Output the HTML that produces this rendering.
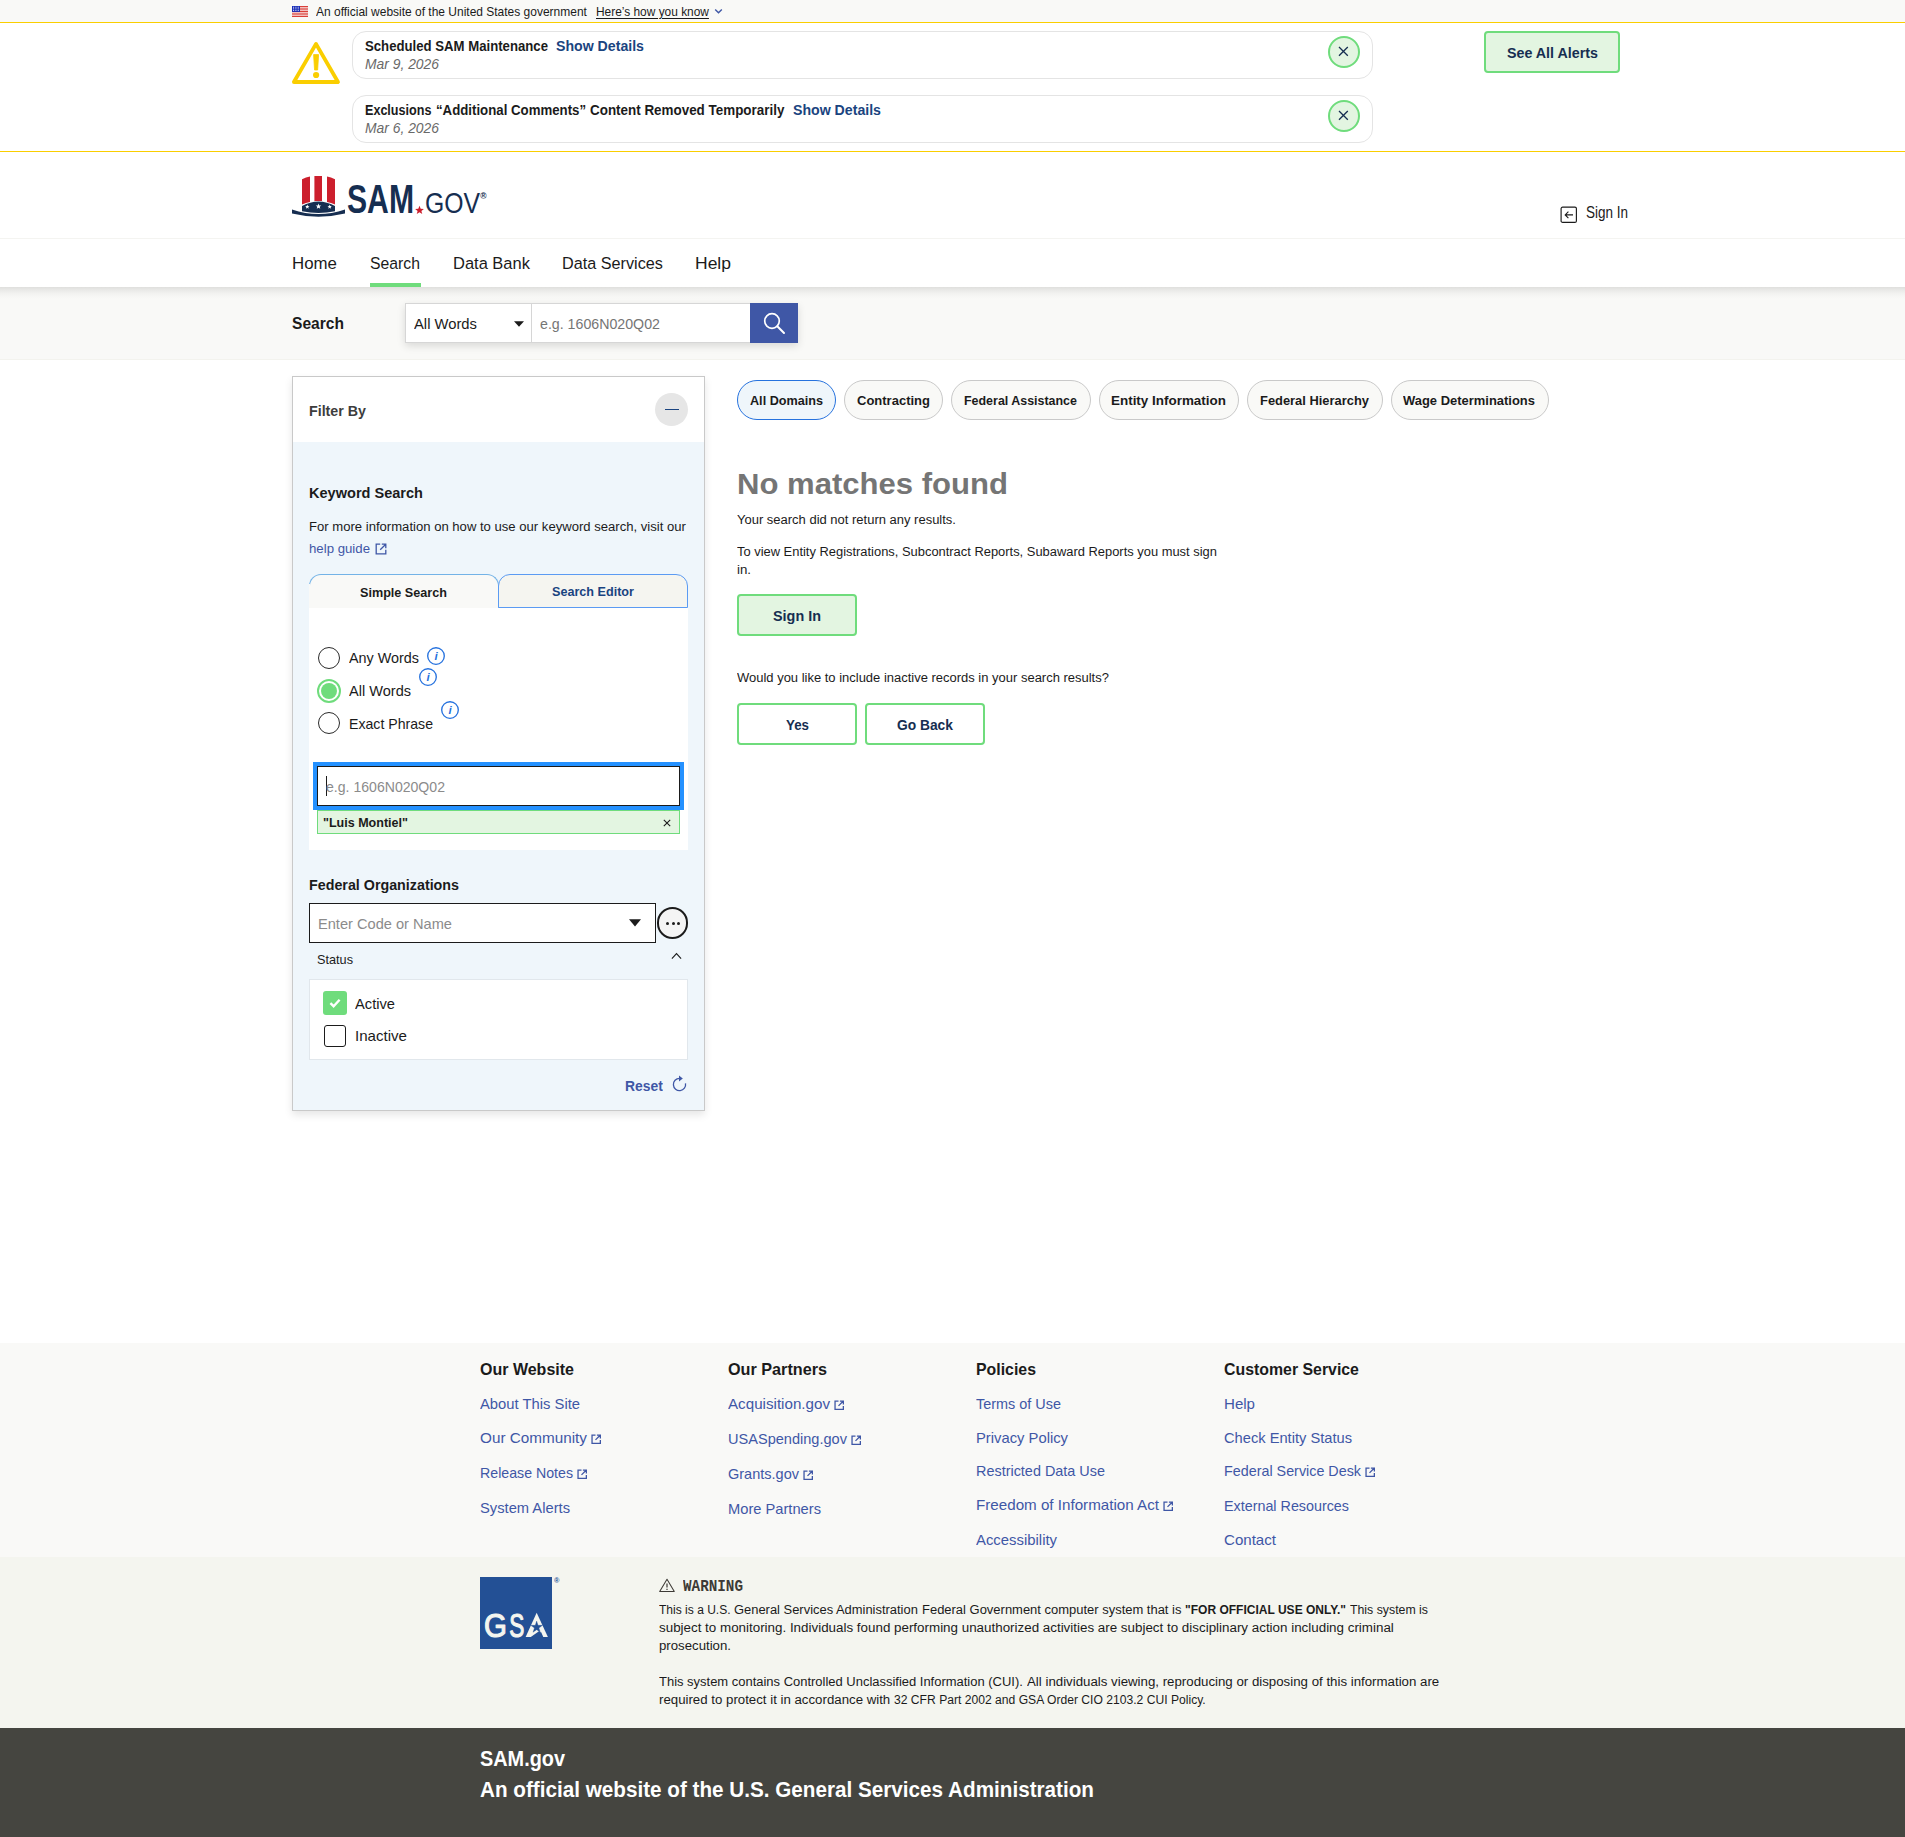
<!DOCTYPE html>
<html lang="en"><head><meta charset="utf-8"><title>SAM.gov | Search</title>
<style>
html,body{margin:0;padding:0;}
body{width:1905px;height:1837px;position:relative;overflow:hidden;background:#fff;font-family:"Liberation Sans",sans-serif;color:#1b1b1b;}
.b{position:absolute;box-sizing:border-box;display:block;}
.t{position:absolute;white-space:nowrap;line-height:1;transform-origin:0 0;display:block;}
</style></head><body>
<div class="b" style="left:0px;top:0px;width:1905px;height:22px;background:#f9f9f7;"></div>
<svg class="b" style="left:292px;top:6px;" width="16" height="11" viewBox="0 0 16 11"><rect width="16" height="11" fill="#fff"/><rect x="0" y="0.000" width="16" height="0.97" fill="#d83933"/><rect x="0" y="1.672" width="16" height="0.97" fill="#d83933"/><rect x="0" y="3.343" width="16" height="0.97" fill="#d83933"/><rect x="0" y="5.015" width="16" height="0.97" fill="#d83933"/><rect x="0" y="6.687" width="16" height="0.97" fill="#d83933"/><rect x="0" y="8.358" width="16" height="0.97" fill="#d83933"/><rect x="0" y="10.030" width="16" height="0.97" fill="#d83933"/><rect width="8" height="5.92" fill="#1a2fb8"/><rect x="1.10" y="0.80" width="1" height="0.85" fill="#fff"/><rect x="1.10" y="2.45" width="1" height="0.85" fill="#fff"/><rect x="1.10" y="4.10" width="1" height="0.85" fill="#fff"/><rect x="3.40" y="0.80" width="1" height="0.85" fill="#fff"/><rect x="3.40" y="2.45" width="1" height="0.85" fill="#fff"/><rect x="3.40" y="4.10" width="1" height="0.85" fill="#fff"/><rect x="5.70" y="0.80" width="1" height="0.85" fill="#fff"/><rect x="5.70" y="2.45" width="1" height="0.85" fill="#fff"/><rect x="5.70" y="4.10" width="1" height="0.85" fill="#fff"/></svg>
<span class="t" style="left:316px;top:5.66px;font-size:12.1px;color:#1b1b1b;transform:scaleX(0.9908);">An official website of the United States government</span>
<span class="t" style="left:596px;top:5.66px;font-size:12.1px;color:#1b1b1b;transform:scaleX(0.9844);text-decoration:underline;text-underline-offset:1.5px;">Here’s how you know</span>
<svg class="b" style="left:714px;top:8px;" width="9" height="7" viewBox="0 0 9 7"><path d="M1.2 1.5 L4.5 4.8 L7.8 1.5" fill="none" stroke="#3f57a6" stroke-width="1.4"/></svg>
<div class="b" style="left:0px;top:22px;width:1905px;height:1px;background:#face00;"></div>
<div class="b" style="left:0px;top:151px;width:1905px;height:1px;background:#face00;"></div>
<svg class="b" style="left:291px;top:41px;" width="50" height="44" viewBox="0 0 50 44"><path d="M25 2.9 L47 41 L2.9 41 Z" fill="none" stroke="#face00" stroke-width="3.8" stroke-linejoin="round"/><path d="M22.6 13.6 h5 l-0.95 15.4 h-3.1 z" fill="#face00" stroke="#face00" stroke-width="0.8" stroke-linejoin="round"/><circle cx="25.1" cy="34" r="3.1" fill="#face00"/></svg>
<div class="b" style="left:352px;top:31px;width:1021px;height:48px;border:1px solid #e4e4e4;border-radius:14px;background:#fff;"></div>
<span class="t" style="left:365px;top:38.90px;font-size:14.3px;color:#1b1b1b;transform:scaleX(0.9212);font-weight:700;">Scheduled SAM Maintenance</span>
<span class="t" style="left:556px;top:38.90px;font-size:14.3px;color:#1a4480;transform:scaleX(0.9888);font-weight:700;">Show Details</span>
<span class="t" style="left:365px;top:56.50px;font-size:14.3px;color:#696969;transform:scaleX(0.9697);font-style:italic;">Mar 9, 2026</span>
<div class="b" style="left:1328.2px;top:35.7px;width:32px;height:32px;border:2px solid #6fdc7c;border-radius:50%;background:#e3f5e1;"></div>
<svg class="b" style="left:1336.1px;top:44.2px;" width="15" height="15" viewBox="0 0 15 15"><path d="M3 3 L11.8 11.8 M11.8 3 L3 11.8" stroke="#162e51" stroke-width="1.3" fill="none"/></svg>
<div class="b" style="left:352px;top:95px;width:1021px;height:48px;border:1px solid #e4e4e4;border-radius:14px;background:#fff;"></div>
<span class="t" style="left:365px;top:102.90px;font-size:14.3px;color:#1b1b1b;transform:scaleX(0.8795);font-weight:700;">Exclusions</span>
<span class="t" style="left:436px;top:102.90px;font-size:14.3px;color:#1b1b1b;transform:scaleX(0.9261);font-weight:700;">“Additional Comments”</span>
<span class="t" style="left:589.6px;top:102.90px;font-size:14.3px;color:#1b1b1b;transform:scaleX(0.9386);font-weight:700;">Content Removed Temporarily</span>
<span class="t" style="left:793px;top:102.90px;font-size:14.3px;color:#1a4480;transform:scaleX(0.9888);font-weight:700;">Show Details</span>
<span class="t" style="left:365px;top:120.50px;font-size:14.3px;color:#696969;transform:scaleX(0.9697);font-style:italic;">Mar 6, 2026</span>
<div class="b" style="left:1328.2px;top:99.7px;width:32px;height:32px;border:2px solid #6fdc7c;border-radius:50%;background:#e3f5e1;"></div>
<svg class="b" style="left:1336.1px;top:108.2px;" width="15" height="15" viewBox="0 0 15 15"><path d="M3 3 L11.8 11.8 M11.8 3 L3 11.8" stroke="#162e51" stroke-width="1.3" fill="none"/></svg>
<div class="b" style="left:1484px;top:31px;width:136px;height:42px;border:2px solid #6fdc7c;border-radius:4px;background:#e3f5e1;"></div>
<span class="t" style="left:1507px;top:44.63px;font-size:15.2px;color:#162e51;transform:scaleX(0.9394);font-weight:700;">See All Alerts</span>
<svg class="b" style="left:292px;top:175px;" width="53" height="44" viewBox="0 0 53 44">
<path d="M10 4.2 Q14 2.2 18 1.6 L18 27 Q14 27.6 10 29.6 Z" fill="#cc1f2d"/>
<path d="M22.4 1 H30 V26 H22.4 Z" fill="#cc1f2d"/>
<path d="M35 1.6 Q39 2.2 43 4.2 L43 29.6 Q39 27.6 35 27 Z" fill="#cc1f2d"/>
<path d="M10 31 Q26.5 22 43 31 L43 36.3 Q26.5 39.5 10 36.3 Z" fill="#162e51"/>
<path d="M0 34.5 Q26.5 43.5 53 34.5 L53 38.6 Q26.5 45 0 38.6 Z" fill="#162e51"/>
<g fill="#fff">
<path d="M0,-2.3 L0.6,-0.75 L2.2,-0.7 L0.95,0.3 L1.4,1.9 L0,1 L-1.4,1.9 L-0.95,0.3 L-2.2,-0.7 L-0.6,-0.75 Z" transform="translate(15.3,31.8)"/>
<path d="M0,-2.3 L0.6,-0.75 L2.2,-0.7 L0.95,0.3 L1.4,1.9 L0,1 L-1.4,1.9 L-0.95,0.3 L-2.2,-0.7 L-0.6,-0.75 Z" transform="translate(26.5,31.4) scale(1.25)"/>
<path d="M0,-2.3 L0.6,-0.75 L2.2,-0.7 L0.95,0.3 L1.4,1.9 L0,1 L-1.4,1.9 L-0.95,0.3 L-2.2,-0.7 L-0.6,-0.75 Z" transform="translate(37.7,31.8)"/>
</g></svg>
<svg class="b" style="left:347px;top:175px;" width="150" height="46" viewBox="0 0 150 46"><text x="0" y="38.1" font-family="Liberation Sans" font-weight="700" font-size="39.8" fill="#162e51" textLength="67" lengthAdjust="spacingAndGlyphs">SAM</text>
<path d="M0,-4.6 L1.2,-1.45 L4.4,-1.4 L1.9,0.6 L2.75,3.75 L0,2 L-2.75,3.75 L-1.9,0.6 L-4.4,-1.4 L-1.2,-1.45 Z" fill="#cc1f2d" transform="translate(72.5,35.3)"/>
<text x="78" y="37.8" font-family="Liberation Sans" font-weight="400" font-size="30.4" fill="#162e51" textLength="55" lengthAdjust="spacingAndGlyphs">GOV</text>
<text x="133.2" y="24.2" font-family="Liberation Sans" font-weight="700" font-size="8.5" fill="#162e51">®</text></svg>
<svg class="b" style="left:1559.6px;top:206px;" width="19" height="19" viewBox="0 0 19 19"><rect x="1.1" y="1.1" width="15.3" height="15.3" rx="1.5" fill="none" stroke="#1b1b1b" stroke-width="1.15"/><path d="M13 8.9 H5.5 M8.4 5.7 L5.2 8.9 L8.4 12.1" fill="none" stroke="#1b1b1b" stroke-width="1.1"/></svg>
<span class="t" style="left:1586px;top:204.71px;font-size:15.7px;color:#1b1b1b;transform:scaleX(0.8593);">Sign In</span>
<div class="b" style="left:0px;top:238px;width:1905px;height:1px;background:#f4f4f1;"></div>
<span class="t" style="left:292px;top:255.20px;font-size:16.3px;color:#1b1b1b;transform:scaleX(1.0350);">Home</span>
<span class="t" style="left:370px;top:255.20px;font-size:16.3px;color:#1b1b1b;transform:scaleX(0.9681);">Search</span>
<span class="t" style="left:453px;top:255.20px;font-size:16.3px;color:#1b1b1b;transform:scaleX(1.0117);">Data Bank</span>
<span class="t" style="left:562px;top:255.20px;font-size:16.3px;color:#1b1b1b;transform:scaleX(0.9955);">Data Services</span>
<span class="t" style="left:695px;top:255.20px;font-size:16.3px;color:#1b1b1b;transform:scaleX(1.0739);">Help</span>
<div class="b" style="left:370px;top:283px;width:51px;height:4px;background:#6fdc7c;"></div>
<div class="b" style="left:0px;top:287px;width:1905px;height:73px;background:#f9f9f7;"></div>
<div class="b" style="left:0px;top:287px;width:1905px;height:12px;background:linear-gradient(#dfdfdd 0%,#e9e9e7 25%,#f1f1ef 50%,#f6f6f4 75%,#f9f9f7 100%);"></div>
<div class="b" style="left:0px;top:359px;width:1905px;height:1px;background:#f3f3ee;"></div>
<span class="t" style="left:292px;top:314.70px;font-size:16.3px;color:#1b1b1b;transform:scaleX(0.9564);font-weight:700;">Search</span>
<div class="b" style="left:405px;top:303px;width:393px;height:40px;box-shadow:0 3px 8px rgba(0,0,0,0.13);background:#fff;"></div>
<div class="b" style="left:405px;top:303px;width:127px;height:40px;border:1px solid #d6d6d6;background:#fff;"></div>
<div class="b" style="left:531px;top:303px;width:220px;height:40px;border:1px solid #d6d6d6;background:#fff;"></div>
<span class="t" style="left:414px;top:316.84px;font-size:14.6px;color:#1b1b1b;transform:scaleX(1.0129);">All Words</span>
<svg class="b" style="left:513px;top:320px;" width="12" height="8" viewBox="0 0 12 8"><path d="M1 1.2 H11 L6 6.8 Z" fill="#1b1b1b"/></svg>
<span class="t" style="left:540px;top:317.04px;font-size:14.6px;color:#757575;transform:scaleX(0.9725);">e.g. 1606N020Q02</span>
<div class="b" style="left:750px;top:303px;width:48px;height:40px;background:#3f57a6;"></div>
<svg class="b" style="left:762px;top:311px;" width="24" height="24" viewBox="0 0 24 24"><circle cx="10" cy="10" r="7.3" fill="none" stroke="#fff" stroke-width="1.7"/><path d="M15.3 15.3 L22 22" stroke="#fff" stroke-width="2" stroke-linecap="round"/></svg>
<div class="b" style="left:292px;top:376px;width:413px;height:735px;border:1px solid #c9c9c9;background:#eff6fb;box-shadow:0 4px 8px rgba(0,0,0,0.10);"></div>
<div class="b" style="left:293px;top:377px;width:411px;height:65px;background:#fff;"></div>
<span class="t" style="left:309px;top:403.73px;font-size:14.5px;color:#3d3d3d;transform:scaleX(0.9825);font-weight:700;">Filter By</span>
<div class="b" style="left:655px;top:393px;width:33px;height:33px;border-radius:50%;background:#e6e6e6;"></div>
<div class="b" style="left:665.3px;top:408.5px;width:13.6px;height:1.2px;background:#1a4480;"></div>
<span class="t" style="left:309px;top:486.43px;font-size:14.5px;color:#1b1b1b;transform:scaleX(1.0033);font-weight:700;">Keyword Search</span>
<span class="t" style="left:309px;top:521.09px;font-size:12.3px;color:#1b1b1b;transform:scaleX(1.0646);">For more information on how to use our keyword search, visit our</span>
<span class="t" style="left:309px;top:542.99px;font-size:12.3px;color:#3f57a6;transform:scaleX(1.0746);">help guide</span>
<svg class="b" style="left:375px;top:542.6px;" width="12" height="12" viewBox="0 0 12 12"><path d="M5.2 1.2 H1.2 V10.8 H10.8 V6.8 M6.8 1.2 H10.8 V5.2 M10.8 1.2 L5.2 6.8" fill="none" stroke="#3f57a6" stroke-width="1.3"/></svg>
<div class="b" style="left:309px;top:607px;width:379px;height:243px;background:#fff;"></div>
<div class="b" style="left:309px;top:574px;width:190px;height:34px;background:#f9f9f7;border:1px solid #73b3e7;border-bottom:none;border-radius:12px 12px 0 0;"></div>
<div class="b" style="left:309px;top:584px;width:1px;height:24px;background:#f9f9f7;"></div>
<div class="b" style="left:498px;top:574px;width:190px;height:34px;background:#f5f5f0;border:1px solid #5b9bf3;border-radius:12px 12px 0 0;"></div>
<span class="t" style="left:360px;top:585.86px;font-size:13.4px;color:#1b1b1b;transform:scaleX(0.9420);font-weight:700;">Simple Search</span>
<span class="t" style="left:552px;top:584.86px;font-size:13.4px;color:#1a4480;transform:scaleX(0.9412);font-weight:700;">Search Editor</span>
<div class="b" style="left:317.5px;top:646.5px;width:22px;height:22px;border-radius:50%;background:#fff;border:1.6px solid #2b2b2b;"></div>
<span class="t" style="left:349px;top:650.30px;font-size:15px;color:#1b1b1b;transform:scaleX(0.9578);">Any Words</span>
<svg class="b" style="left:426px;top:646px;" width="20" height="20" viewBox="0 0 20 20"><circle cx="10" cy="10" r="8.3" fill="none" stroke="#2672de" stroke-width="1.35"/><text x="10" y="14.4" text-anchor="middle" font-family="Liberation Sans" font-style="italic" font-weight="700" font-size="11.5" fill="#2672de">i</text></svg>
<div class="b" style="left:317px;top:679px;width:24px;height:24px;border-radius:50%;background:#fff;border:2px solid #6fdc7c;"></div>
<div class="b" style="left:321px;top:683px;width:16px;height:16px;border-radius:50%;background:#6fdc7c;"></div>
<span class="t" style="left:349px;top:683.30px;font-size:15px;color:#1b1b1b;transform:scaleX(0.9702);">All Words</span>
<svg class="b" style="left:418px;top:667px;" width="20" height="20" viewBox="0 0 20 20"><circle cx="10" cy="10" r="8.3" fill="none" stroke="#2672de" stroke-width="1.35"/><text x="10" y="14.4" text-anchor="middle" font-family="Liberation Sans" font-style="italic" font-weight="700" font-size="11.5" fill="#2672de">i</text></svg>
<div class="b" style="left:317.5px;top:711.8px;width:22px;height:22px;border-radius:50%;background:#fff;border:1.6px solid #2b2b2b;"></div>
<span class="t" style="left:349px;top:716.30px;font-size:15px;color:#1b1b1b;transform:scaleX(0.9416);">Exact Phrase</span>
<svg class="b" style="left:440px;top:700px;" width="20" height="20" viewBox="0 0 20 20"><circle cx="10" cy="10" r="8.3" fill="none" stroke="#2672de" stroke-width="1.35"/><text x="10" y="14.4" text-anchor="middle" font-family="Liberation Sans" font-style="italic" font-weight="700" font-size="11.5" fill="#2672de">i</text></svg>
<div class="b" style="left:313px;top:762px;width:371px;height:48px;background:#2491ff;"></div>
<div class="b" style="left:317px;top:766px;width:363px;height:40px;background:#fff;border:1px solid #1b1b1b;"></div>
<div class="b" style="left:326px;top:776px;width:1px;height:20px;background:#1b1b1b;"></div>
<span class="t" style="left:326px;top:779.67px;font-size:14.8px;color:#8b8b8b;transform:scaleX(0.9514);">e.g. 1606N020Q02</span>
<div class="b" style="left:317px;top:810px;width:363px;height:24px;background:#e3f5e1;border:1px solid #6fdc7c;"></div>
<span class="t" style="left:323px;top:817.13px;font-size:12.6px;color:#1b1b1b;transform:scaleX(0.9948);font-weight:700;">"Luis Montiel"</span>
<svg class="b" style="left:662px;top:818px;" width="10" height="10" viewBox="0 0 10 10"><path d="M1.8 1.8 L8.2 8.2 M8.2 1.8 L1.8 8.2" stroke="#1b1b1b" stroke-width="1.1" fill="none"/></svg>
<span class="t" style="left:309px;top:877.93px;font-size:14.5px;color:#1b1b1b;transform:scaleX(0.9850);font-weight:700;">Federal Organizations</span>
<div class="b" style="left:309px;top:903px;width:347px;height:40px;background:#fff;border:1px solid #1b1b1b;"></div>
<span class="t" style="left:318px;top:916.20px;font-size:15px;color:#8b8b8b;transform:scaleX(0.9741);">Enter Code or Name</span>
<svg class="b" style="left:628px;top:918px;" width="14" height="10" viewBox="0 0 14 10"><path d="M1 1.2 H13 L7 8.4 Z" fill="#1b1b1b"/></svg>
<div class="b" style="left:656.5px;top:907px;width:31.5px;height:31.5px;border-radius:50%;background:#f4f4f4;border:2px solid #1b1b1b;"></div>
<div class="b" style="left:666.3px;top:922.4px;width:3.1px;height:3.1px;border-radius:50%;background:#1b1b1b;"></div>
<div class="b" style="left:671.5999999999999px;top:922.4px;width:3.1px;height:3.1px;border-radius:50%;background:#1b1b1b;"></div>
<div class="b" style="left:676.9px;top:922.4px;width:3.1px;height:3.1px;border-radius:50%;background:#1b1b1b;"></div>
<span class="t" style="left:317px;top:954.23px;font-size:12.6px;color:#1b1b1b;transform:scaleX(1.0078);">Status</span>
<svg class="b" style="left:670.3px;top:950.8px;" width="13" height="9" viewBox="0 0 13 9"><path d="M1.9 7.6 L6.5 2.6 L11.1 7.6" fill="none" stroke="#1b1b1b" stroke-width="1.1"/></svg>
<div class="b" style="left:309px;top:979px;width:379px;height:81px;background:#fff;border:1px solid #e1e7ec;"></div>
<div class="b" style="left:323px;top:991px;width:24px;height:24px;border-radius:3px;background:#6fdc7c;"></div>
<svg class="b" style="left:328px;top:996px;" width="14" height="14" viewBox="0 0 14 14"><path d="M2.4 7.2 L5.6 10.2 L11.6 3.8" fill="none" stroke="#fff" stroke-width="2.4"/></svg>
<span class="t" style="left:355px;top:995.90px;font-size:15px;color:#1b1b1b;transform:scaleX(0.9793);">Active</span>
<div class="b" style="left:324px;top:1024.5px;width:22px;height:22px;border-radius:3px;background:#fff;border:1.6px solid #1b1b1b;"></div>
<span class="t" style="left:355px;top:1027.90px;font-size:15px;color:#1b1b1b;transform:scaleX(1.0059);">Inactive</span>
<span class="t" style="left:625px;top:1077.80px;font-size:15px;color:#3f57a6;transform:scaleX(0.9252);font-weight:700;">Reset</span>
<svg class="b" style="left:671px;top:1075.2px;" width="17" height="18" viewBox="0 0 17 18"><path d="M8.5 3.4 A6.1 6.1 0 1 0 14.5 8.4" fill="none" stroke="#3f57a6" stroke-width="1.3"/><path d="M8 0.4 L11.8 3.4 L8 6.4 Z" fill="#3f57a6"/></svg>
<div class="b" style="left:737px;top:380px;width:99px;height:40px;border-radius:20px;border:1px solid #2672de;background:#eff6fb;"></div>
<span class="t" style="left:750px;top:394.63px;font-size:12.6px;color:#1b1b1b;transform:scaleX(1.0026);font-weight:700;">All Domains</span>
<div class="b" style="left:844px;top:380px;width:99px;height:40px;border-radius:20px;border:1px solid #c9c9c9;background:#f9f9f7;"></div>
<span class="t" style="left:857px;top:394.63px;font-size:12.6px;color:#1b1b1b;transform:scaleX(1.0326);font-weight:700;">Contracting</span>
<div class="b" style="left:951px;top:380px;width:140px;height:40px;border-radius:20px;border:1px solid #c9c9c9;background:#f9f9f7;"></div>
<span class="t" style="left:964px;top:394.63px;font-size:12.6px;color:#1b1b1b;transform:scaleX(0.9878);font-weight:700;">Federal Assistance</span>
<div class="b" style="left:1099px;top:380px;width:140px;height:40px;border-radius:20px;border:1px solid #c9c9c9;background:#f9f9f7;"></div>
<span class="t" style="left:1111px;top:394.63px;font-size:12.6px;color:#1b1b1b;transform:scaleX(1.0668);font-weight:700;">Entity Information</span>
<div class="b" style="left:1247px;top:380px;width:136px;height:40px;border-radius:20px;border:1px solid #c9c9c9;background:#f9f9f7;"></div>
<span class="t" style="left:1260px;top:394.63px;font-size:12.6px;color:#1b1b1b;transform:scaleX(1.0239);font-weight:700;">Federal Hierarchy</span>
<div class="b" style="left:1391px;top:380px;width:158px;height:40px;border-radius:20px;border:1px solid #c9c9c9;background:#f9f9f7;"></div>
<span class="t" style="left:1403px;top:394.63px;font-size:12.6px;color:#1b1b1b;transform:scaleX(1.0284);font-weight:700;">Wage Determinations</span>
<span class="t" style="left:737px;top:468.91px;font-size:30px;color:#757575;transform:scaleX(1.0356);font-weight:700;">No matches found</span>
<span class="t" style="left:737px;top:513.79px;font-size:12.3px;color:#1b1b1b;transform:scaleX(1.0560);">Your search did not return any results.</span>
<span class="t" style="left:737px;top:545.79px;font-size:12.3px;color:#1b1b1b;transform:scaleX(1.0495);">To view Entity Registrations, Subcontract Reports, Subaward Reports you must sign</span>
<span class="t" style="left:737px;top:563.79px;font-size:12.3px;color:#1b1b1b;transform:scaleX(1.0777);">in.</span>
<div class="b" style="left:737px;top:594px;width:120px;height:42px;border:2px solid #6fdc7c;border-radius:4px;background:#e3f5e1;"></div>
<span class="t" style="left:773px;top:607.63px;font-size:15.2px;color:#162e51;transform:scaleX(0.9475);font-weight:700;">Sign In</span>
<span class="t" style="left:737px;top:671.79px;font-size:12.3px;color:#1b1b1b;transform:scaleX(1.0552);">Would you like to include inactive records in your search results?</span>
<div class="b" style="left:737px;top:703px;width:120px;height:42px;border:2px solid #6fdc7c;border-radius:4px;background:#fff;"></div>
<span class="t" style="left:786px;top:716.63px;font-size:15.2px;color:#162e51;transform:scaleX(0.8776);font-weight:700;">Yes</span>
<div class="b" style="left:865px;top:703px;width:120px;height:42px;border:2px solid #6fdc7c;border-radius:4px;background:#fff;"></div>
<span class="t" style="left:897px;top:716.63px;font-size:15.2px;color:#162e51;transform:scaleX(0.9081);font-weight:700;">Go Back</span>
<div class="b" style="left:0px;top:1343px;width:1905px;height:214px;background:#f9f9f7;"></div>
<div class="b" style="left:0px;top:1557px;width:1905px;height:171px;background:#f4f5ef;"></div>
<div class="b" style="left:0px;top:1728px;width:1905px;height:109px;background:#454540;"></div>
<span class="t" style="left:480px;top:1361.75px;font-size:16.6px;color:#1b1b1b;transform:scaleX(0.9644);font-weight:700;">Our Website</span>
<span class="t" style="left:480px;top:1396.30px;font-size:15px;color:#3f57a6;transform:scaleX(0.9857);">About This Site</span>
<span class="t" style="left:480px;top:1430.30px;font-size:15px;color:#3f57a6;transform:scaleX(1.0188);">Our Community</span>
<svg class="b" style="left:590.6px;top:1433.6px;" width="10.4" height="10.4" viewBox="0 0 12 12"><path d="M5.2 1.2 H1.2 V10.8 H10.8 V6.8 M6.8 1.2 H10.8 V5.2 M10.8 1.2 L5.2 6.8" fill="none" stroke="#3f57a6" stroke-width="1.5"/></svg>
<span class="t" style="left:480px;top:1465.30px;font-size:15px;color:#3f57a6;transform:scaleX(0.9453);">Release Notes</span>
<svg class="b" style="left:576.6px;top:1468.6px;" width="10.4" height="10.4" viewBox="0 0 12 12"><path d="M5.2 1.2 H1.2 V10.8 H10.8 V6.8 M6.8 1.2 H10.8 V5.2 M10.8 1.2 L5.2 6.8" fill="none" stroke="#3f57a6" stroke-width="1.5"/></svg>
<span class="t" style="left:480px;top:1500.30px;font-size:15px;color:#3f57a6;transform:scaleX(0.9815);">System Alerts</span>
<span class="t" style="left:728px;top:1361.75px;font-size:16.6px;color:#1b1b1b;transform:scaleX(0.9756);font-weight:700;">Our Partners</span>
<span class="t" style="left:728px;top:1396.30px;font-size:15px;color:#3f57a6;transform:scaleX(1.0110);">Acquisition.gov</span>
<svg class="b" style="left:833.6px;top:1399.6px;" width="10.4" height="10.4" viewBox="0 0 12 12"><path d="M5.2 1.2 H1.2 V10.8 H10.8 V6.8 M6.8 1.2 H10.8 V5.2 M10.8 1.2 L5.2 6.8" fill="none" stroke="#3f57a6" stroke-width="1.5"/></svg>
<span class="t" style="left:728px;top:1431.30px;font-size:15px;color:#3f57a6;transform:scaleX(0.9707);">USASpending.gov</span>
<svg class="b" style="left:850.6px;top:1434.6px;" width="10.4" height="10.4" viewBox="0 0 12 12"><path d="M5.2 1.2 H1.2 V10.8 H10.8 V6.8 M6.8 1.2 H10.8 V5.2 M10.8 1.2 L5.2 6.8" fill="none" stroke="#3f57a6" stroke-width="1.5"/></svg>
<span class="t" style="left:728px;top:1466.30px;font-size:15px;color:#3f57a6;transform:scaleX(0.9677);">Grants.gov</span>
<svg class="b" style="left:802.6px;top:1469.6px;" width="10.4" height="10.4" viewBox="0 0 12 12"><path d="M5.2 1.2 H1.2 V10.8 H10.8 V6.8 M6.8 1.2 H10.8 V5.2 M10.8 1.2 L5.2 6.8" fill="none" stroke="#3f57a6" stroke-width="1.5"/></svg>
<span class="t" style="left:728px;top:1501.30px;font-size:15px;color:#3f57a6;transform:scaleX(0.9786);">More Partners</span>
<span class="t" style="left:976px;top:1361.75px;font-size:16.6px;color:#1b1b1b;transform:scaleX(0.9563);font-weight:700;">Policies</span>
<span class="t" style="left:976px;top:1396.30px;font-size:15px;color:#3f57a6;transform:scaleX(0.9621);">Terms of Use</span>
<span class="t" style="left:976px;top:1430.30px;font-size:15px;color:#3f57a6;transform:scaleX(0.9855);">Privacy Policy</span>
<span class="t" style="left:976px;top:1463.30px;font-size:15px;color:#3f57a6;transform:scaleX(0.9611);">Restricted Data Use</span>
<span class="t" style="left:976px;top:1497.30px;font-size:15px;color:#3f57a6;transform:scaleX(1.0115);">Freedom of Information Act</span>
<svg class="b" style="left:1162.6px;top:1500.6px;" width="10.4" height="10.4" viewBox="0 0 12 12"><path d="M5.2 1.2 H1.2 V10.8 H10.8 V6.8 M6.8 1.2 H10.8 V5.2 M10.8 1.2 L5.2 6.8" fill="none" stroke="#3f57a6" stroke-width="1.5"/></svg>
<span class="t" style="left:976px;top:1532.30px;font-size:15px;color:#3f57a6;transform:scaleX(0.9916);">Accessibility</span>
<span class="t" style="left:1224px;top:1361.75px;font-size:16.6px;color:#1b1b1b;transform:scaleX(0.9563);font-weight:700;">Customer Service</span>
<span class="t" style="left:1224px;top:1396.30px;font-size:15px;color:#3f57a6;transform:scaleX(1.0049);">Help</span>
<span class="t" style="left:1224px;top:1430.30px;font-size:15px;color:#3f57a6;transform:scaleX(0.9779);">Check Entity Status</span>
<span class="t" style="left:1224px;top:1463.30px;font-size:15px;color:#3f57a6;transform:scaleX(0.9555);">Federal Service Desk</span>
<svg class="b" style="left:1364.6px;top:1466.6px;" width="10.4" height="10.4" viewBox="0 0 12 12"><path d="M5.2 1.2 H1.2 V10.8 H10.8 V6.8 M6.8 1.2 H10.8 V5.2 M10.8 1.2 L5.2 6.8" fill="none" stroke="#3f57a6" stroke-width="1.5"/></svg>
<span class="t" style="left:1224px;top:1498.30px;font-size:15px;color:#3f57a6;transform:scaleX(0.9550);">External Resources</span>
<span class="t" style="left:1224px;top:1532.30px;font-size:15px;color:#3f57a6;transform:scaleX(1.0059);">Contact</span>
<div class="b" style="left:480px;top:1577px;width:72px;height:72px;background:#235095;"></div>
<svg class="b" style="left:480px;top:1577px;" width="72" height="72" viewBox="0 0 72 72"><g font-family="Liberation Sans" font-size="33.5" fill="#f4f5ef" stroke="#f4f5ef" stroke-width="1.2" stroke-linejoin="round"><text transform="translate(3.98,59.65) scale(0.879,1)">G</text><text transform="translate(29.26,59.65) scale(0.675,1)">S</text></g><path d="M56.66 35.7 L67.9 60.1 L45.65 60.1 Z" fill="#f4f5ef"/><path d="M56.66,44.01 58.06,48.32 62.59,48.32 58.93,50.99 60.33,55.30 56.66,52.63 52.99,55.30 54.39,50.99 50.73,48.32 55.26,48.32Z" fill="#235095" stroke="#235095" stroke-width="0.3"/><path d="M50.42 60.3 L63.4 60.3 L61.19 55.29 L60.31 55.29 L58.97 54.32 Z" fill="#235095"/></svg>
<span class="t" style="left:553.9px;top:1577.07px;font-size:7px;color:#235095;transform:scaleX(1.0470);font-weight:700;">®</span>
<svg class="b" style="left:658px;top:1577px;" width="18" height="16" viewBox="0 0 18 16"><path d="M9 2.2 L16.3 14.4 H1.7 Z" fill="none" stroke="#3d3a36" stroke-width="1.05" stroke-linejoin="round"/><path d="M9 6.4 V10.6 M9 11.7 V13" stroke="#3d3a36" stroke-width="1.2"/></svg>
<span class="t" style="left:683.3px;top:1578.74px;font-size:16px;color:#3d3a36;transform:scaleX(0.8927);font-weight:700;font-family:'Liberation Mono',monospace;">WARNING</span>
<span class="t" style="left:659px;top:1603.89px;font-size:12.3px;color:#1b1b1b;transform:scaleX(0.9790);">This is a U.S.</span>
<span class="t" style="left:734px;top:1603.89px;font-size:12.3px;color:#1b1b1b;transform:scaleX(1.0508);">General Services Administration</span>
<span class="t" style="left:921.7px;top:1603.89px;font-size:12.3px;color:#1b1b1b;transform:scaleX(1.0545);">Federal Government computer system that is</span>
<span class="t" style="left:1185px;top:1603.89px;font-size:12.3px;color:#1b1b1b;transform:scaleX(0.9773);font-weight:700;">"FOR OFFICIAL USE ONLY."</span>
<span class="t" style="left:1350px;top:1603.89px;font-size:12.3px;color:#1b1b1b;transform:scaleX(1.0012);">This system is</span>
<span class="t" style="left:659px;top:1621.89px;font-size:12.3px;color:#1b1b1b;transform:scaleX(1.0881);">subject to monitoring. Individuals found performing unauthorized activities are subject to disciplinary action including criminal</span>
<span class="t" style="left:659px;top:1639.89px;font-size:12.3px;color:#1b1b1b;transform:scaleX(1.0745);">prosecution.</span>
<span class="t" style="left:659px;top:1675.89px;font-size:12.3px;color:#1b1b1b;transform:scaleX(1.0542);">This system contains Controlled Unclassified Information (CUI).</span>
<span class="t" style="left:1026.7px;top:1675.89px;font-size:12.3px;color:#1b1b1b;transform:scaleX(1.0788);">All individuals viewing, reproducing or disposing of this information are</span>
<span class="t" style="left:659px;top:1693.89px;font-size:12.3px;color:#1b1b1b;transform:scaleX(1.0774);">required to protect it in accordance with</span>
<span class="t" style="left:893.6px;top:1693.89px;font-size:12.3px;color:#1b1b1b;transform:scaleX(0.9858);">32 CFR Part 2002 and GSA Order CIO 2103.2 CUI Policy.</span>
<span class="t" style="left:480px;top:1748.38px;font-size:22px;color:#fff;transform:scaleX(0.9032);font-weight:700;">SAM.gov</span>
<span class="t" style="left:480px;top:1779.38px;font-size:22px;color:#fff;transform:scaleX(0.9399);font-weight:700;">An official website of the U.S. General Services Administration</span>
</body></html>
